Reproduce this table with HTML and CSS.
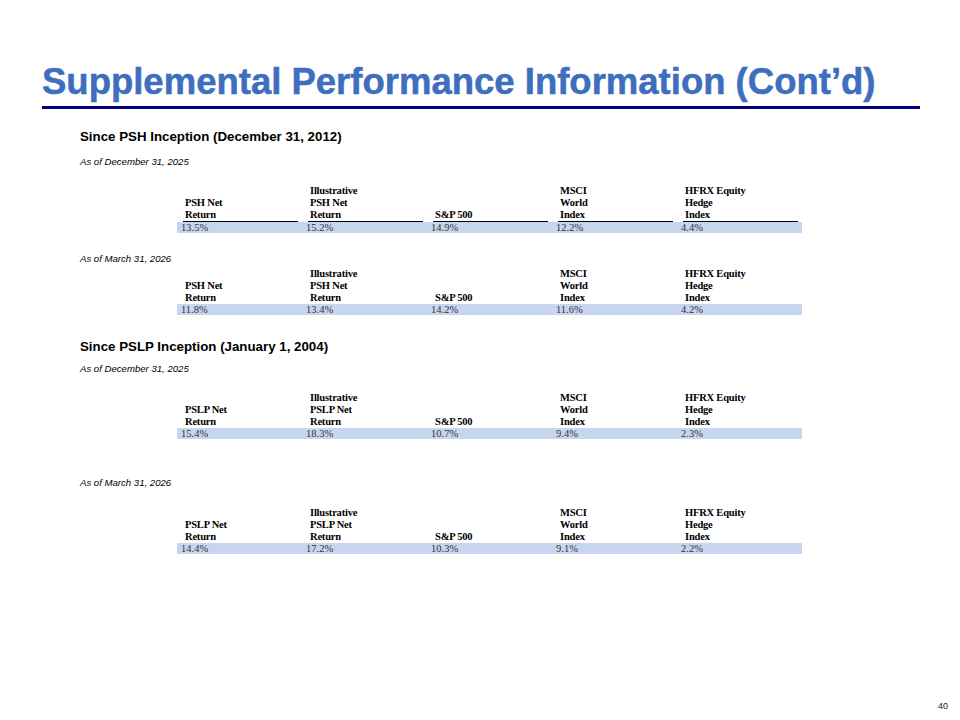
FILE: index.html
```html
<!DOCTYPE html>
<html>
<head>
<meta charset="utf-8">
<link rel="stylesheet" href="styles.css">
</head>
<body>
<div class="page">
  <header class="head">
    <h1 class="title">Supplemental Performance Information (Cont’d)</h1>
    <div class="rule"></div>
  </header>
  <main class="content">
    <h2 class="section s1">Since PSH Inception (December 31, 2012)</h2>
    <p class="asof a1">As of December 31, 2025</p>
    <div class="tbl t1 underlined">
      <div class="hd"><span class="hl"><br>PSH Net<br><span class="ul">Return</span></span></div>
      <div class="hd"><span class="hl">Illustrative<br>PSH Net<br><span class="ul">Return</span></span></div>
      <div class="hd"><span class="hl"><br><br><span class="ul">S&amp;P 500</span></span></div>
      <div class="hd"><span class="hl">MSCI<br>World<br><span class="ul">Index</span></span></div>
      <div class="hd"><span class="hl">HFRX Equity<br>Hedge<br><span class="ul">Index</span></span></div>
      <div class="dv">13.5%</div><div class="dv">15.2%</div><div class="dv">14.9%</div><div class="dv">12.2%</div><div class="dv">4.4%</div>
    </div>
    <p class="asof a2">As of March 31, 2026</p>
    <div class="tbl t2">
      <div class="hd"><br>PSH Net<br>Return</div>
      <div class="hd">Illustrative<br>PSH Net<br>Return</div>
      <div class="hd"><br><br>S&amp;P 500</div>
      <div class="hd">MSCI<br>World<br>Index</div>
      <div class="hd">HFRX Equity<br>Hedge<br>Index</div>
      <div class="dv">11.8%</div><div class="dv">13.4%</div><div class="dv">14.2%</div><div class="dv">11.6%</div><div class="dv">4.2%</div>
    </div>
    <h2 class="section s2">Since PSLP Inception (January 1, 2004)</h2>
    <p class="asof a3">As of December 31, 2025</p>
    <div class="tbl t3">
      <div class="hd"><br>PSLP Net<br>Return</div>
      <div class="hd">Illustrative<br>PSLP Net<br>Return</div>
      <div class="hd"><br><br>S&amp;P 500</div>
      <div class="hd">MSCI<br>World<br>Index</div>
      <div class="hd">HFRX Equity<br>Hedge<br>Index</div>
      <div class="dv">15.4%</div><div class="dv">18.3%</div><div class="dv">10.7%</div><div class="dv">9.4%</div><div class="dv">2.3%</div>
    </div>
    <p class="asof a4">As of March 31, 2026</p>
    <div class="tbl t4">
      <div class="hd"><br>PSLP Net<br>Return</div>
      <div class="hd">Illustrative<br>PSLP Net<br>Return</div>
      <div class="hd"><br><br>S&amp;P 500</div>
      <div class="hd">MSCI<br>World<br>Index</div>
      <div class="hd">HFRX Equity<br>Hedge<br>Index</div>
      <div class="dv">14.4%</div><div class="dv">17.2%</div><div class="dv">10.3%</div><div class="dv">9.1%</div><div class="dv">2.2%</div>
    </div>
  </main>
  <footer class="foot">40</footer>
</div>
</body>
</html>
```
FILE: styles.css
```css
* { box-sizing: border-box; }
html, body { margin: 0; padding: 0; background: #ffffff; }
.page {
  width: 960px;
  height: 720px;
  display: flex;
  flex-direction: column;
  font-family: "Liberation Sans", Arial, sans-serif;
  color: #000;
}
.head { padding: 0 40px 0 42px; }
.title {
  margin: 62px 0 0 0;
  font-size: 36.5px;
  line-height: 40px;
  font-weight: bold;
  color: #3d6ec0;
  -webkit-text-stroke: 0.5px #3d6ec0;
  letter-spacing: 0;
  white-space: nowrap;
}
.rule {
  margin-top: 4px;
  height: 3px;
  background: #000080;
  width: 878px;
}
.content { padding-left: 80px; }
.section {
  margin: 0;
  font-size: 13.3px;
  line-height: 16px;
  font-weight: bold;
}
.s1 { margin-top: 20px; }
.s2 { margin-top: 24px; }
.asof {
  margin: 0;
  font-size: 9.6px;
  line-height: 12px;
  font-style: italic;
}
.a1 { margin-top: 11px; }
.a2 { margin-top: 20px; }
.a3 { margin-top: 8px; }
.a4 { margin-top: 38px; }
.tbl {
  margin-left: 97px;
  width: 625px;
  display: grid;
  grid-template-columns: repeat(5, 125px);
  font-family: "Liberation Serif", "Times New Roman", serif;
  font-size: 10.5px;
}
.t1 { margin-top: 17px; }
.t2 { margin-top: 3px; }
.t3 { margin-top: 17px; }
.t4 { margin-top: 18px; }
.hd {
  padding-left: 8px;
  font-weight: bold;
  line-height: 12px;
  letter-spacing: -0.2px;
}
.hl { display: block; }
.underlined .hd { padding-left: 6px; }
.underlined .hl { padding-left: 2px; width: 115px; border-bottom: 1px solid #000; }
.dv {
  background: #c6d6ee;
  padding-left: 4px;
  line-height: 11px;
  height: 11px;
  color: #333;
}
.foot {
  margin-top: auto;
  align-self: flex-end;
  padding: 0 12px 8px 0;
  font-size: 9px;
  line-height: 12px;
  color: #222;
}
```
